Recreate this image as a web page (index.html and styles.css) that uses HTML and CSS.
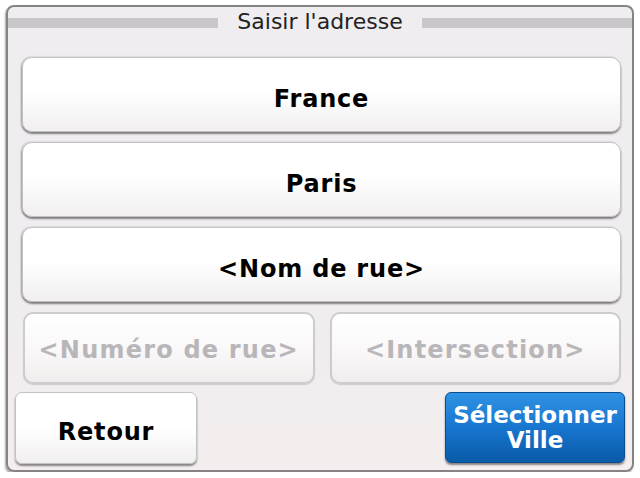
FILE: index.html
```html
<!DOCTYPE html>
<html lang="fr">
<head>
  <meta charset="UTF-8" />
  <title>Saisir l'adresse</title>
  <link rel="stylesheet" href="styles.css">
</head>
<body>
  <div class="frame">
    <div class="header">
      <span class="bar"></span>
      <span class="title">Saisir l'adresse</span>
      <span class="bar"></span>
    </div>

    <div class="fields">
      <button class="field">France</button>
      <button class="field">Paris</button>
      <button class="field">&lt;Nom de rue&gt;</button>
      <div class="pair">
        <button class="field small" disabled>&lt;Numéro de rue&gt;</button>
        <button class="field small" disabled>&lt;Intersection&gt;</button>
      </div>
    </div>

    <div class="actions">
      <button class="back">Retour</button>
      <button class="select">Sélectionner<br>Ville</button>
    </div>
  </div>
</body>
</html>
```

FILE: styles.css
```css
body {
  margin: 0;
  background: #ffffff;
  font-family: "DejaVu Sans", Verdana, sans-serif;
}
.frame {
  margin: 5px 0 0 6px;
  width: 624px;
  height: 463px;
  border: 2px solid #858385;
  border-radius: 8px;
  background: linear-gradient(#efedef 0%, #efedef 60%, #f4eeee 100%);
  box-shadow: -1px 2px 2px rgba(0, 0, 0, 0.35);
  display: flex;
  flex-direction: column;
}
.header {
  height: 50px;
  display: flex;
  align-items: flex-start;
}
.bar {
  flex: 1;
  height: 10px;
  margin-top: 11px;
  background: #c9c7c9;
}
.title {
  padding: 2px 19px 0;
  font-size: 22px;
  color: #222222;
  line-height: 26px;
}
.fields {
  padding: 0 11px 0 14px;
  display: flex;
  flex-direction: column;
  gap: 10px;
}
button {
  font-family: "DejaVu Sans", Verdana, sans-serif;
  font-weight: bold;
  cursor: pointer;
}
.field {
  height: 75px;
  padding-top: 9px;
  border: 1px solid #c4c2c4;
  border-radius: 10px;
  background: linear-gradient(#ffffff 0%, #ffffff 45%, #f1efef 100%);
  box-shadow: 0 2px 2px rgba(0, 0, 0, 0.45), -1px 0 2px rgba(0, 0, 0, 0.25);
  font-size: 24px;
  letter-spacing: 0.8px;
  color: #000000;
}
.pair {
  display: flex;
  gap: 15px;
  padding-left: 1px;
}
.field.small {
  flex: 1;
  height: 72px;
  padding-top: 4px;
  border: 2px solid #cdcbcd;
  box-shadow: 0 1px 1px rgba(0, 0, 0, 0.15);
  background: linear-gradient(#ffffff 0%, #faf8f9 50%, #f1eded 100%);
  font-size: 24px;
  letter-spacing: 1.2px;
  color: #b8b6b8;
}
.actions {
  margin-top: 8px;
  padding: 0 7px 0 7px;
  display: flex;
  justify-content: space-between;
}
.back {
  width: 182px;
  height: 72px;
  padding-top: 9px;
  border: 1px solid #c4c2c4;
  border-radius: 7px;
  background: linear-gradient(#ffffff 0%, #ffffff 50%, #f1efef 100%);
  box-shadow: 0 2px 2px rgba(0, 0, 0, 0.45);
  font-size: 24px;
  letter-spacing: 0.8px;
  color: #000000;
}
.select {
  width: 180px;
  height: 71px;
  border: 1px solid #0b4c8e;
  border-radius: 6px;
  background: linear-gradient(#2f92e4 0%, #1673cc 55%, #0a5aa8 100%);
  box-shadow: 0 2px 2px rgba(0, 0, 0, 0.45);
  font-size: 23px;
  line-height: 25px;
  padding: 0;
  color: #ffffff;
}
```
